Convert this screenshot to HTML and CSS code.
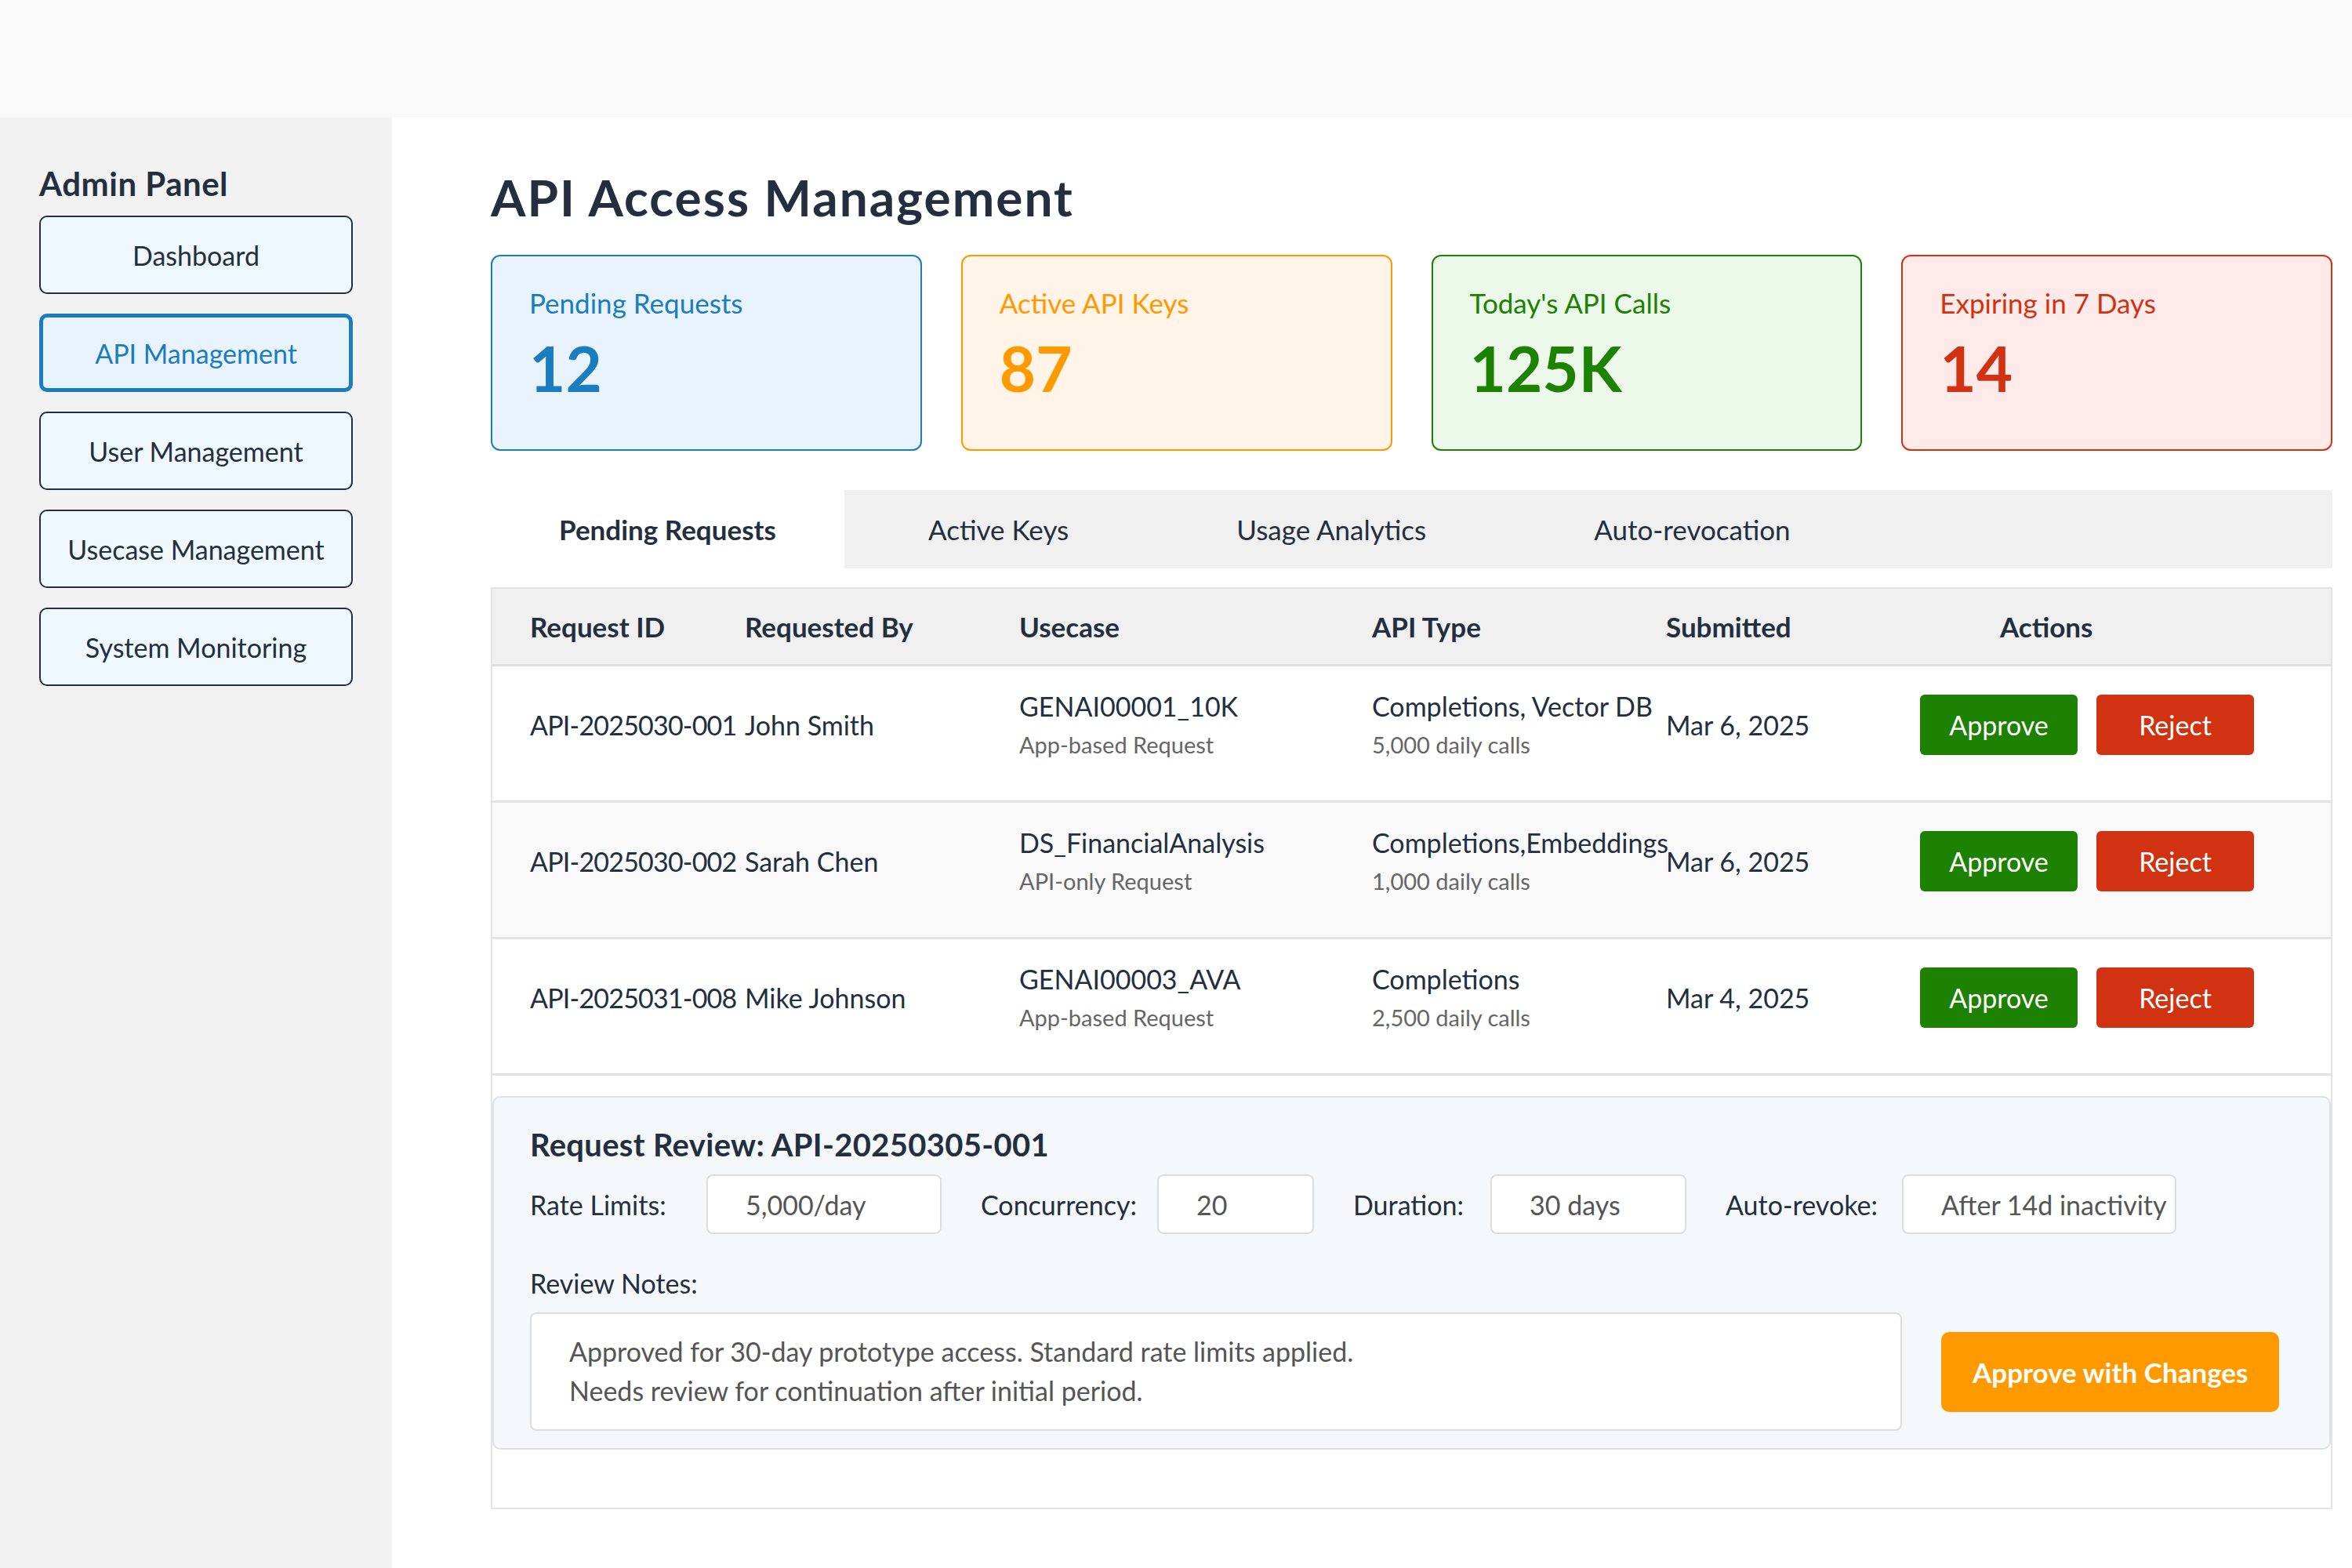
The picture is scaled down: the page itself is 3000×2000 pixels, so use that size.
FILE: index.html
```html
<!DOCTYPE html>
<html lang="en">
<head>
<meta charset="utf-8">
<title>API Access Management</title>
<link rel="stylesheet" href="styles.css">
</head>
<body>
<div class="topbar"></div>
<div class="layout">
  <aside class="sidebar">
    <h3 class="side-title">Admin Panel</h3>
    <nav class="side-nav">
      <a class="nav-btn">Dashboard</a>
      <a class="nav-btn active">API Management</a>
      <a class="nav-btn">User Management</a>
      <a class="nav-btn">Usecase Management</a>
      <a class="nav-btn">System Monitoring</a>
    </nav>
  </aside>
  <main class="main">
    <h1 class="page-title">API Access Management</h1>
    <div class="stats">
      <div class="stat stat-blue"><div class="stat-label">Pending Requests</div><div class="stat-value">12</div></div>
      <div class="stat stat-orange"><div class="stat-label">Active API Keys</div><div class="stat-value">87</div></div>
      <div class="stat stat-green"><div class="stat-label">Today's API Calls</div><div class="stat-value">125K</div></div>
      <div class="stat stat-red"><div class="stat-label">Expiring in 7 Days</div><div class="stat-value">14</div></div>
    </div>
    <div class="tabs">
      <div class="tab active">Pending Requests</div>
      <div class="tab">Active Keys</div>
      <div class="tab">Usage Analytics</div>
      <div class="tab">Auto-revocation</div>
    </div>
    <div class="tab-panel">
      <table class="req-table">
        <colgroup>
          <col class="c-id"><col class="c-by"><col class="c-use"><col class="c-type"><col class="c-date"><col>
        </colgroup>
        <thead>
          <tr>
            <th>Request ID</th><th>Requested By</th><th>Usecase</th><th>API Type</th><th>Submitted</th><th class="th-actions">Actions</th>
          </tr>
        </thead>
        <tbody>
          <tr>
            <td class="req-id">API-2025030-001</td>
            <td>John Smith</td>
            <td><div class="line">GENAI00001_10K</div><div class="sub">App-based Request</div></td>
            <td><div class="line">Completions, Vector DB</div><div class="sub">5,000 daily calls</div></td>
            <td>Mar 6, 2025</td>
            <td><div class="actions"><button class="btn approve">Approve</button><button class="btn reject">Reject</button></div></td>
          </tr>
          <tr class="alt">
            <td class="req-id">API-2025030-002</td>
            <td>Sarah Chen</td>
            <td><div class="line">DS_FinancialAnalysis</div><div class="sub">API-only Request</div></td>
            <td><div class="line">Completions,Embeddings</div><div class="sub">1,000 daily calls</div></td>
            <td>Mar 6, 2025</td>
            <td><div class="actions"><button class="btn approve">Approve</button><button class="btn reject">Reject</button></div></td>
          </tr>
          <tr>
            <td class="req-id">API-2025031-008</td>
            <td>Mike Johnson</td>
            <td><div class="line">GENAI00003_AVA</div><div class="sub">App-based Request</div></td>
            <td><div class="line">Completions</div><div class="sub">2,500 daily calls</div></td>
            <td>Mar 4, 2025</td>
            <td><div class="actions"><button class="btn approve">Approve</button><button class="btn reject">Reject</button></div></td>
          </tr>
        </tbody>
      </table>
      <section class="review">
        <h3 class="review-title">Request Review: API-20250305-001</h3>
        <div class="fields">
          <label class="field-label">Rate Limits:</label>
          <input class="field field-rate" type="text" value="5,000/day" readonly>
          <label class="field-label">Concurrency:</label>
          <input class="field field-conc" type="text" value="20" readonly>
          <label class="field-label narrow">Duration:</label>
          <input class="field field-dur" type="text" value="30 days" readonly>
          <label class="field-label">Auto-revoke:</label>
          <input class="field field-auto" type="text" value="After 14d inactivity" readonly>
        </div>
        <div class="notes-label">Review Notes:</div>
        <div class="notes-row">
          <textarea class="notes" readonly>Approved for 30-day prototype access. Standard rate limits applied.
Needs review for continuation after initial period.</textarea>
          <button class="btn-changes">Approve with Changes</button>
        </div>
      </section>
    </div>
  </main>
</div>
</body>
</html>
```

FILE: styles.css
```css
html, body {
  margin: 0;
  padding: 0;
}

body {
  font-family: Lato, "Noto Sans", sans-serif;
  color: #232f3e;
  background: #ffffff;
}

.topbar {
  height: 150px;
  background: #f9f9f9;
}

.layout {
  display: flex;
  min-height: 1850px;
}

/* Sidebar */
.sidebar {
  width: 500px;
  flex: none;
  box-sizing: border-box;
  background: #f2f2f2;
  padding: 60px 50px;
}

.side-title {
  margin: 0 0 17px;
  font-size: 42px;
  line-height: 48px;
  font-weight: 700;
  letter-spacing: 0.5px;
}

.side-nav {
  display: flex;
  flex-direction: column;
  gap: 25px;
}

.nav-btn {
  height: 100px;
  box-sizing: border-box;
  display: flex;
  align-items: center;
  justify-content: center;
  border: 2px solid #232f3e;
  border-radius: 10px;
  background: #f0f8ff;
  font-size: 34px;
  color: #232f3e;
}

.nav-btn.active {
  border: 5px solid #1a7dbf;
  background: #e8f3fe;
  color: #1a7dbf;
}

/* Main */
.main {
  flex: 1;
  box-sizing: border-box;
  padding: 63px 25px 0 126px;
}

.page-title {
  margin: 0 0 35px;
  font-size: 64px;
  line-height: 77px;
  font-weight: 700;
  letter-spacing: 2px;
}

.stats {
  display: grid;
  grid-template-columns: repeat(4, 1fr);
  gap: 50px;
  margin-bottom: 50px;
}

.stat {
  height: 250px;
  box-sizing: border-box;
  border: 2px solid;
  border-radius: 12px;
  padding: 38px 47px 0;
}

.stat-label {
  font-size: 35px;
  line-height: 42px;
}

.stat-value {
  margin-top: 14px;
  font-size: 80px;
  line-height: 96px;
  font-weight: 700;
}

.stat-blue { background: #e8f3fd; border-color: #1a7dbf; color: #1a7dbf; }
.stat-orange { background: #fff4e7; border-color: #ff9900; color: #ff9900; }
.stat-green { background: #ebf8ea; border-color: #1d8102; color: #1d8102; }
.stat-red { background: #ffeaea; border-color: #d13212; color: #d13212; }

/* Tabs */
.tabs {
  display: flex;
  background: #f0f0f0;
}

.tab {
  padding: 29px 107px;
  font-size: 35px;
  line-height: 42px;
  white-space: nowrap;
}

.tab.active {
  min-width: 451px;
  box-sizing: border-box;
  padding: 29px 0;
  text-align: center;
  background: #ffffff;
  font-weight: 700;
}

/* Table panel */
.tab-panel {
  margin-top: 24px;
  border: 2px solid #e3e3e3;
  padding-bottom: 74px;
}

.req-table {
  width: 100%;
  table-layout: fixed;
  border-collapse: collapse;
}

.c-id { width: 274px; }
.c-by { width: 350px; }
.c-use { width: 450px; }
.c-type { width: 375px; }
.c-date { width: 324px; }

.req-table th {
  padding: 27px 0 27px 48px;
  background: #f0f0f0;
  border-bottom: 3px solid #dedede;
  font-size: 35px;
  line-height: 42px;
  font-weight: 700;
  text-align: left;
  white-space: nowrap;
}

.req-table th.th-actions {
  padding-left: 150px;
}

.req-table td {
  padding: 30px 0 53px 48px;
  border-bottom: 3px solid #e3e3e3;
  font-size: 34px;
  line-height: 41px;
  vertical-align: middle;
  white-space: nowrap;
}

.req-table td.req-id {
  letter-spacing: -0.8px;
}

.req-table tr.alt td {
  background: #f9f9f9;
}

.sub {
  margin-top: 11px;
  font-size: 29px;
  line-height: 36px;
  color: #666666;
}

.actions {
  display: flex;
  gap: 24px;
}

.btn {
  width: 201px;
  height: 77px;
  border: none;
  border-radius: 6px;
  color: #ffffff;
  font-family: inherit;
  font-size: 34px;
}

.btn.approve { background: #1d8102; }
.btn.reject { background: #d13212; }

/* Review */
.review {
  margin-top: 26px;
  background: #f5f8fb;
  border: 2px solid #e0e0e0;
  border-radius: 10px;
  padding: 36px 46px 22px;
}

.review-title {
  margin: 0 0 14px;
  font-size: 40px;
  line-height: 48px;
  font-weight: 700;
  letter-spacing: 0.3px;
}

.fields {
  display: flex;
  align-items: center;
}

.field-label {
  width: 200px;
  margin-right: 25px;
  font-size: 34px;
  line-height: 41px;
  white-space: nowrap;
}

.field-label.narrow {
  width: 150px;
}

.field {
  height: 76px;
  box-sizing: border-box;
  margin-right: 50px;
  padding: 0 0 0 48px;
  border: 2px solid #dddddd;
  border-radius: 8px;
  background: #ffffff;
  font-family: inherit;
  font-size: 34px;
  color: #555555;
}

.field-rate { width: 300px; }
.field-conc { width: 200px; }
.field-dur { width: 250px; }
.field-auto { width: 350px; margin-right: 0; }

.notes-label {
  margin-top: 42px;
  font-size: 34px;
  line-height: 41px;
}

.notes-row {
  display: flex;
  align-items: center;
  gap: 50px;
  margin-top: 17px;
}

.notes {
  width: 1750px;
  height: 151px;
  box-sizing: border-box;
  padding: 23px 48px;
  border: 2px solid #dddddd;
  border-radius: 8px;
  background: #ffffff;
  font-family: inherit;
  font-size: 34px;
  line-height: 50px;
  color: #555555;
  resize: none;
  overflow: hidden;
}

.btn-changes {
  height: 102px;
  padding: 0 40px;
  border: none;
  border-radius: 10px;
  background: #ff9900;
  color: #ffffff;
  font-family: inherit;
  font-size: 35px;
  font-weight: 700;
}
```
